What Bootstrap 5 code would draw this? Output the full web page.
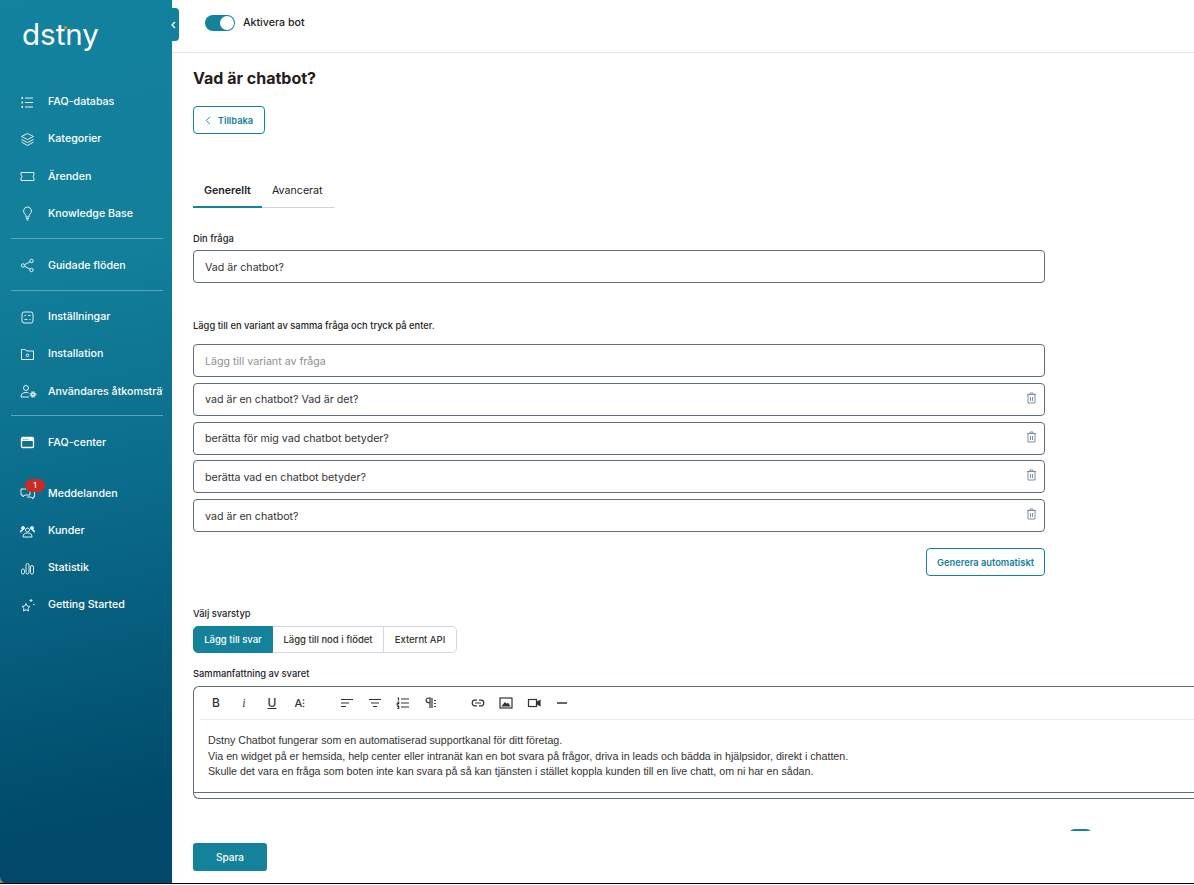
<!DOCTYPE html>
<html lang="sv"><head><meta charset="utf-8"><title>Vad är chatbot?</title>
<link href="https://cdn.jsdelivr.net/npm/bootstrap@5.3.0/dist/css/bootstrap.min.css" rel="stylesheet">
<style>
html,body{height:885px;overflow:hidden;background:#fff}
body{font-family:Inter,"Liberation Sans",sans-serif;font-size:10.65px;color:#1d1d1f}
.app-frame{height:884px;border-bottom:1px solid #000;display:flex;position:relative;overflow:hidden;background:#8d7f6c}
.side-rail{width:172px;flex:none;height:884px;background:linear-gradient(168deg,#13829e 0%,#127f9b 30%,#0b6c8b 55%,#00496a 92%);border-bottom-left-radius:8px;color:#fff;position:relative}
.brand-box{height:75px;padding:18px 0 0 22px}
.brand-word{font-family:Inter,"Liberation Sans",sans-serif;font-size:29.5px;line-height:32px;font-weight:400;color:#fff;position:relative;display:inline-block}
.brand-dot{position:absolute;left:42px;top:8px;width:3px;height:3px;border-radius:50%;background:#f08a1d}
.collapse-tab{position:absolute;left:168px;top:8px;width:11px;height:33px;background:#127f9b;border-radius:0 4px 4px 0;display:flex;align-items:center;padding-left:3px;z-index:2}
.menu-stack{padding-top:8.6px}
.menu-row{height:37.2px;padding-left:20px;display:flex;align-items:center;color:#fff;text-decoration:none;font-weight:500;white-space:nowrap;width:163px;overflow:hidden;position:relative}
.menu-row svg{width:15px;height:15px;flex:none;margin-right:13px;fill:none;stroke:#e3f1f5;stroke-width:1}
.menu-sep{height:1px;background:#5ea7bb;margin:6px 9px 8px 11px;width:152px}
.menu-sep.tight{margin-top:5px}
.menu-gap{height:14px}
.note-pill{position:absolute;left:25px;top:4px;background:#cc2a24;color:#fff;width:20px;height:13px;border-radius:7px;font-size:8px;line-height:13px;text-align:center}
.main-area{flex:1;min-width:0;overflow:hidden;background:#fff;box-shadow:inset 8px 0 8px -8px rgba(0,0,0,.05)}
.top-strip{height:53px;border-bottom:1px solid #e4e4e7;padding:0 0 7px 33px;display:flex;align-items:center;gap:8px;font-weight:500}
.pill-toggle{width:30px;height:16px;border-radius:8px;background:#15829b;position:relative;display:block}
.pill-toggle::after{content:"";position:absolute;right:1px;top:1px;width:14px;height:14px;border-radius:50%;background:#fff}
.page-body{padding:0 0 0 21px}
.page-title{font-size:16px;font-weight:700;color:#261c1c;line-height:20px;margin:15px 0 0}
.ghost-btn{display:inline-flex;align-items:center;justify-content:center;border:1px solid #15829b;border-radius:4px;background:#fff;color:#15809a;font-size:9.3px;font-weight:600;padding:1px 0 0}
.back-btn{width:72px;height:28px;margin-top:18px;gap:7px}
.tab-strip{display:flex;width:141px;margin-top:43px;border-bottom:1px solid #d3d3de;height:31px}
.tab-item{padding:0 10px 0 11px;line-height:27px;font-weight:400;color:#222;height:31px}
.tab-item.is-on{width:69px;font-weight:600;border-bottom:2px solid #15829b;color:#1d1d1f}
.tab-item.off{padding-left:10px}
.field-cap{font-size:9.35px;font-weight:500;line-height:12px;color:#1d1d1f;margin:0}
.wide-box{width:852px;height:33px;border:1px solid #5f6b80;border-radius:4px;background:#fff;display:flex;align-items:center;justify-content:space-between;padding:2px 7px 0 11px;color:#333}
.wide-box.row-h{margin-top:5.75px}
.wide-box .hint{color:#8f8f8f}
.trash-ic{width:11px;height:12px;fill:none;stroke:#7f8da0;stroke-width:1;margin-bottom:5px}
.gen-wrap{width:852px;display:flex;justify-content:flex-end;margin-top:16px}
.gen-btn{width:119px;height:28px}
.seg-group{display:flex;margin-top:6px;height:27px;width:264px}
.seg-item{display:flex;align-items:center;justify-content:center;font-size:9.5px;font-weight:500;border:1px solid #d4d7e1;border-left:0;color:#333;padding-top:1px}
.seg-item.first{background:#15829b;color:#fff;width:80px;border:1px solid #15829b;border-radius:5px 0 0 5px}
.seg-item.mid{width:111px}
.seg-item.last{width:73px;border-radius:0 5px 5px 0}
.editor-shell{width:1010px;height:113px;border:1px solid #5f6b80;border-right:0;border-radius:6px 0 0 6px;margin-top:6px;background:#fff;display:flex;flex-direction:column}
.tool-row{height:33px;margin:0 0 0 6px;border-bottom:1px solid #e9eaee;display:flex;align-items:center;padding-left:9px;flex:none}
.tool-ic{width:14px;height:14px;flex:none;display:flex;align-items:center;justify-content:center;font-size:12px;color:#333;font-weight:500;margin-right:14px;line-height:1}
.tool-ic svg{width:14px;height:14px;flex:none;fill:none;stroke:#333;stroke-width:1.2}
.tool-space{width:19px;flex:none}
.editor-text{padding:13px 0 0 14px;font-family:"Liberation Sans",Arial,sans-serif;font-size:10.67px;line-height:15.6px;color:#333;flex:1;white-space:nowrap}
.editor-foot{height:6px;border-top:1px solid #5f6b80;flex:none}
.stub-row{height:2px;width:1000px;margin-top:30px;overflow:hidden;position:relative}
.stub-pill{position:absolute;left:875px;top:0;width:25px;height:14px;border-radius:8px;background:#15829b}
.save-btn{display:block;width:74px;height:28px;margin-top:12px;background:#15829b;color:#fff;border:0;border-radius:3px;font-size:10px;font-weight:500;padding:0}
</style></head><body>
<div class="app-frame">
<aside class="side-rail">
 <div class="brand-box"><span class="brand-word">dstny<span class="brand-dot"></span></span></div>
 <nav class="menu-stack">
  <a class="menu-row" href="#"><svg viewBox="0 0 15 15"><path d="M5 3h8M5 7.500h8M5 12h8"/><path d="M1.500 3h1.500M1.500 7.500h1.500M1.500 12h1.500" stroke-width="2"/></svg>FAQ-databas</a>
  <a class="menu-row" href="#"><svg viewBox="0 0 15 15"><path d="M7.500 1.500 13.500 4.500 7.500 7.500 1.500 4.500zM1.500 7.500l6 3 6-3M1.500 10l6 3.500 6-3.500"/></svg>Kategorier</a>
  <a class="menu-row" href="#"><svg viewBox="0 0 15 15"><path d="M1 3.500h13v2.800a1.300 1.300 0 0 0 0 2.500v2.700H1V8.800a1.300 1.300 0 0 0 0-2.500z"/></svg>Ärenden</a>
  <a class="menu-row" href="#"><svg viewBox="0 0 15 15"><path d="M7.500 1a4 4 0 0 0-2.200 7.300c.5.500.6 1.700.7 2.700h3c.1-1 .2-2.200.7-2.700A4 4 0 0 0 7.500 1zM6 12.500h3M6.500 14h2"/></svg>Knowledge Base</a>
  <div class="menu-sep"></div>
  <a class="menu-row" href="#"><svg viewBox="0 0 15 15"><circle cx="3" cy="7.500" r="1.700"/><circle cx="11.500" cy="3" r="1.700"/><circle cx="11.500" cy="12" r="1.700"/><path d="M4.500 6.700 10 3.800M4.500 8.300 10 11.200"/></svg>Guidade flöden</a>
  <div class="menu-sep tight"></div>
  <a class="menu-row" href="#"><svg viewBox="0 0 15 15"><rect x="2" y="2" width="11" height="11" rx="2"/><path d="M4.500 5.500h1.500M8 5.500h2.500M4.500 9.500h3M9.500 9.500h1"/></svg>Inställningar</a>
  <a class="menu-row" href="#"><svg viewBox="0 0 15 15"><path d="M1.500 2.500h4l1 1.500h7v8.500h-12z"/><circle cx="7.500" cy="8.300" r="1.300"/></svg>Installation</a>
  <a class="menu-row" href="#"><svg viewBox="0 0 17 15" style="width:17px;margin-right:11px"><circle cx="6" cy="4" r="2.500"/><path d="M1 13c0-3 1.500-4.500 5-4.500 1 0 2 .2 2.700.6M1 13h8"/><circle cx="13" cy="10.500" r="2.200" fill="#e3f1f5" stroke-width=".6"/><circle cx="13" cy="10.500" r="3" stroke-width="1" stroke-dasharray="1.200 1.200"/><circle cx="13" cy="10.500" r=".8" fill="#0f7592" stroke="none"/></svg>Användares åtkomsträttigheter</a>
  <div class="menu-sep tight"></div>
  <a class="menu-row" href="#"><svg viewBox="0 0 15 15"><rect x="1.500" y="2.500" width="12" height="10" rx="1.200" stroke="#fff" stroke-width="1.300"/><path d="M1.500 4.500h12" stroke-width="3" stroke="#fff"/><path d="M3.500 4.500h.8M5.500 4.500h.8M7.500 4.500h.8" stroke="#127f9b"/></svg>FAQ-center</a>
  <div class="menu-gap"></div>
  <a class="menu-row" href="#"><svg viewBox="0 0 15 15"><path d="M1 3h9v6H5l-2 2V9H1z"/><path d="M12 5h2.500v6H13v2l-2-2H7"/></svg>Meddelanden<span class="note-pill">1</span></a>
  <a class="menu-row" href="#"><svg viewBox="0 0 15 15"><circle cx="3" cy="4" r="1.500" fill="#e3f1f5"/><circle cx="12" cy="4" r="1.500" fill="#e3f1f5"/><circle cx="7.500" cy="6" r="2"/><path d="M3 13c0-3 1.500-4 4.500-4s4.500 1 4.500 4z"/><path d="M.5 8.500c0-1.500 1-2.500 2.500-2.500M14.500 8.500c0-1.500-1-2.500-2.500-2.500" stroke-width="1.500"/></svg>Kunder</a>
  <a class="menu-row" href="#"><svg viewBox="0 0 15 15"><rect x="1.500" y="8" width="3" height="5" rx="1.500"/><rect x="6" y="2.500" width="3" height="10.500" rx="1.500"/><rect x="10.500" y="4.500" width="3" height="8.500" rx="1.500"/></svg>Statistik</a>
  <a class="menu-row" href="#"><svg viewBox="0 0 15 15"><path d="M6 5.500 7.300 8l2.700.4-2 1.900.5 2.700L6 11.700 3.500 13l.5-2.700-2-1.900L4.700 8z"/><path d="M11 1v3M9.500 2.500h3M13 6.500h1.500"/></svg>Getting Started</a>
 </nav>
</aside>
<div class="collapse-tab"><svg width="5" height="8" viewBox="0 0 5 8" fill="none" stroke="#fff" stroke-width="1.300"><path d="M4 1 1 4l3 3"/></svg></div>
<main class="main-area">
 <div class="top-strip"><span class="pill-toggle"></span><span>Aktivera bot</span></div>
 <div class="page-body">
  <h1 class="page-title">Vad är chatbot?</h1>
  <button class="ghost-btn back-btn" type="button"><svg width="6" height="9" viewBox="0 0 6 9" fill="none" stroke="#15829b" stroke-width=".9"><path d="M5 .8 1.300 4.500 5 8.200"/></svg>Tillbaka</button>
  <div class="tab-strip"><div class="tab-item is-on">Generellt</div><div class="tab-item off">Avancerat</div></div>
  <p class="field-cap" style="margin-top:25px">Din fråga</p>
  <div class="wide-box" style="margin-top:5px">Vad är chatbot?</div>
  <p class="field-cap" style="margin-top:37px">Lägg till en variant av samma fråga och tryck på enter.</p>
  <div class="wide-box" style="margin-top:12px"><span class="hint">Lägg till variant av fråga</span></div>
  <div class="wide-box row-h">vad är en chatbot? Vad är det?<svg class="trash-ic" viewBox="0 0 11 12"><path d="M1 2.500h9M4 2.500V1h3v1.500M2 2.500V11h7V2.500M4.500 5v4M6.500 5v4"/></svg></div>
  <div class="wide-box row-h">berätta för mig vad chatbot betyder?<svg class="trash-ic" viewBox="0 0 11 12"><path d="M1 2.500h9M4 2.500V1h3v1.500M2 2.500V11h7V2.500M4.500 5v4M6.500 5v4"/></svg></div>
  <div class="wide-box row-h">berätta vad en chatbot betyder?<svg class="trash-ic" viewBox="0 0 11 12"><path d="M1 2.500h9M4 2.500V1h3v1.500M2 2.500V11h7V2.500M4.500 5v4M6.500 5v4"/></svg></div>
  <div class="wide-box row-h">vad är en chatbot?<svg class="trash-ic" viewBox="0 0 11 12"><path d="M1 2.500h9M4 2.500V1h3v1.500M2 2.500V11h7V2.500M4.500 5v4M6.500 5v4"/></svg></div>
  <div class="gen-wrap"><button class="ghost-btn gen-btn" type="button">Generera automatiskt</button></div>
  <p class="field-cap" style="margin-top:32px">Välj svarstyp</p>
  <div class="seg-group"><div class="seg-item first">Lägg till svar</div><div class="seg-item mid">Lägg till nod i flödet</div><div class="seg-item last">Externt API</div></div>
  <p class="field-cap" style="margin-top:15px">Sammanfattning av svaret</p>
  <div class="editor-shell">
   <div class="tool-row">
    <span class="tool-ic">B</span>
    <span class="tool-ic" style="font-style:italic;font-family:'Liberation Serif',serif">i</span>
    <span class="tool-ic" style="text-decoration:underline">U</span>
    <span class="tool-ic" style="font-size:11px">A⁝</span>
    <span class="tool-space"></span>
    <span class="tool-ic"><svg viewBox="0 0 14 14"><path d="M1 3.500h12M1 7h8M1 10.500h5"/></svg></span>
    <span class="tool-ic"><svg viewBox="0 0 14 14"><path d="M1 3.500h12M3 7h8M5 10.500h4"/></svg></span>
    <span class="tool-ic"><svg viewBox="0 0 14 14"><path d="M5 3h8M5 7h8M5 11h8M1.500 2h1v2.500M1.200 6h1.500v1.500H1.200V9h1.500M1.200 10.300h1.500v2.200H1.200"/></svg></span>
    <span class="tool-ic"><svg viewBox="0 0 14 14"><path d="M7 2H4.500a2.300 2.300 0 0 0 0 4.600H6M6 2v10M8 2v10"/><path d="M11 4v1M11 7v1M11 10v1" stroke-width="1.800"/></svg></span>
    <span class="tool-space"></span>
    <span class="tool-ic"><svg viewBox="0 0 14 14"><path d="M6 4.200H4a2.800 2.800 0 0 0 0 5.600h2M8 4.200h2a2.800 2.800 0 0 1 0 5.600H8M4 7h6"/></svg></span>
    <span class="tool-ic"><svg viewBox="0 0 14 14"><rect x="1" y="2" width="12" height="10"/><path d="M3.500 10 6 7l1.500 1.500L9 7.500l1.500 2.500z" fill="#333"/></svg></span>
    <span class="tool-ic"><svg viewBox="0 0 14 14"><rect x="1.500" y="3.500" width="8" height="7"/><path d="M10 6l3-1.500v5L10 8z" fill="#333"/></svg></span>
    <span class="tool-ic"><svg viewBox="0 0 14 14"><path d="M2 7h10" stroke-width="1.500"/></svg></span>
   </div>
   <div class="editor-text">Dstny Chatbot fungerar som en automatiserad supportkanal för ditt företag.<br>Via en widget på er hemsida, help center eller intranät kan en bot svara på frågor, driva in leads och bädda in hjälpsidor, direkt i chatten.<br>Skulle det vara en fråga som boten inte kan svara på så kan tjänsten i stället koppla kunden till en live chatt, om ni har en sådan.</div>
   <div class="editor-foot"></div>
  </div>
  <div class="stub-row"><span class="stub-pill"></span></div>
  <button class="save-btn" type="button">Spara</button>
 </div>
</main>
</div>
<script src="https://cdn.jsdelivr.net/npm/bootstrap@5.3.0/dist/js/bootstrap.bundle.min.js"></script>
</body></html>
